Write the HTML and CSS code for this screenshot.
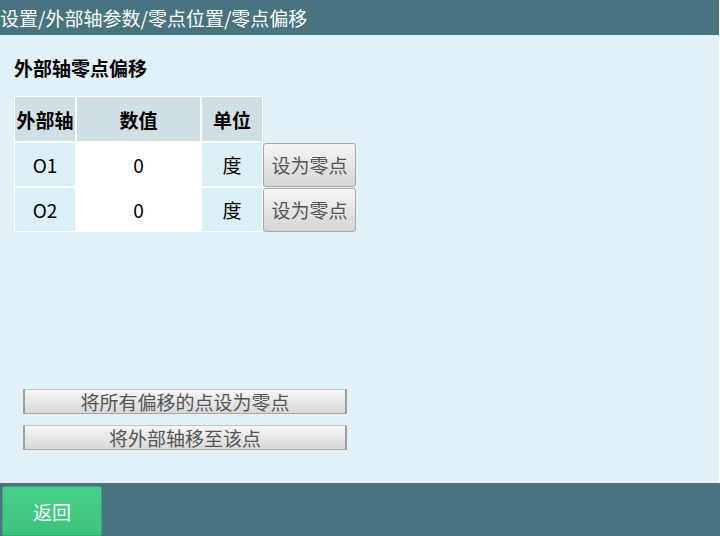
FILE: index.html
```html
<!DOCTYPE html>
<html lang="zh-CN">
<head>
<meta charset="utf-8">
<title>零点偏移</title>
<link rel="stylesheet" href="styles.css">
</head>
<body>
<div class="page">
  <header class="topbar">设置/外部轴参数/零点位置/零点偏移</header>
  <main class="content">
    <h1 class="title">外部轴零点偏移</h1>
    <table class="grid">
      <thead>
        <tr>
          <th class="c-axis">外部轴</th>
          <th class="c-val">数值</th>
          <th class="c-unit">单位</th>
          <th class="c-act"></th>
        </tr>
      </thead>
      <tbody>
        <tr>
          <td class="c-axis">O1</td>
          <td class="c-val">0</td>
          <td class="c-unit">度</td>
          <td class="c-act"><button class="btn-zero">设为零点</button></td>
        </tr>
        <tr>
          <td class="c-axis">O2</td>
          <td class="c-val">0</td>
          <td class="c-unit">度</td>
          <td class="c-act"><button class="btn-zero">设为零点</button></td>
        </tr>
      </tbody>
    </table>
    <div class="actions">
      <button class="btn-wide">将所有偏移的点设为零点</button>
      <button class="btn-wide">将外部轴移至该点</button>
    </div>
  </main>
  <footer class="bottombar">
    <button class="btn-back">返回</button>
  </footer>
</div>
</body>
</html>
```

FILE: styles.css
```css
* { box-sizing: border-box; }
html, body {
  margin: 0;
  padding: 0;
  background: #ffffff;
}
body {
  font-family: "Noto Sans CJK SC", "Noto Sans", sans-serif;
  width: 720px;
  height: 536px;
  overflow: hidden;
}
.page {
  display: flex;
  flex-direction: column;
  height: 536px;
}
.topbar {
  width: 719px;
  height: 35px;
  background: #48737f;
  color: #ffffff;
  font-size: 19px;
  line-height: 35px;
  padding-left: 0;
  white-space: nowrap;
}
.content {
  width: 719px;
  height: 448px;
  background: #e2f1f7;
  display: flex;
  flex-direction: column;
  align-items: flex-start;
  padding: 20px 0 0 14px;
}
.title {
  margin: 0;
  font-size: 19px;
  font-weight: bold;
  line-height: 25px;
  color: #000;
}
.grid {
  margin-top: 16px;
  border-collapse: separate;
  border-spacing: 0;
  font-size: 19px;
  table-layout: fixed;
  width: 343px;
}
.grid th, .grid td {
  border: 1px solid #ffffff;
  padding: 0;
  text-align: center;
  vertical-align: middle;
  color: #000;
  white-space: nowrap;
}
.grid th {
  background: #d0dfe3;
  font-weight: bold;
  height: 46px;
}
.grid td {
  height: 45px;
  font-weight: normal;
}
.grid .c-axis { width: 62px; }
.grid .c-val { width: 125px; }
.grid .c-unit { width: 62px; }
.grid td.c-axis, .grid td.c-unit { background: #daeff6; }
.grid td.c-val { background: #ffffff; }
.grid .c-act {
  border: none;
  background: transparent;
  width: 94px;
}
.btn-zero {
  display: block;
  width: 93px;
  height: 44px;
  margin: 0;
  padding: 0;
  font-family: inherit;
  font-size: 19px;
  color: #555555;
  background: linear-gradient(#f6f6f6, #d5d5d5);
  border: 1px solid #a9a9a9;
  border-radius: 3px;
}
.actions {
  margin-top: auto;
  margin-bottom: 33px;
  margin-left: 9px;
  display: flex;
  flex-direction: column;
  gap: 11px;
}
.btn-wide {
  width: 324px;
  height: 25px;
  padding: 0;
  font-family: inherit;
  font-size: 19px;
  line-height: 21px;
  color: #555555;
  background: linear-gradient(#f7f7f7, #d8d8d8);
  border: 1px solid #c4c4c4;
  border-left: 2px solid #9c9c9c;
  border-right: 2px solid #9c9c9c;
  border-bottom-color: #a8a8a8;
  border-radius: 1px;
}
.bottombar {
  flex: 1;
  background: #48737f;
  display: flex;
  align-items: flex-end;
  padding-left: 2px;
}
.btn-back {
  width: 100px;
  height: 50px;
  padding: 0;
  font-family: inherit;
  font-size: 19px;
  color: #ffffff;
  background: linear-gradient(#46d088, #3dc27c);
  border: 1px solid #3aa970;
  border-radius: 2px;
}
```
